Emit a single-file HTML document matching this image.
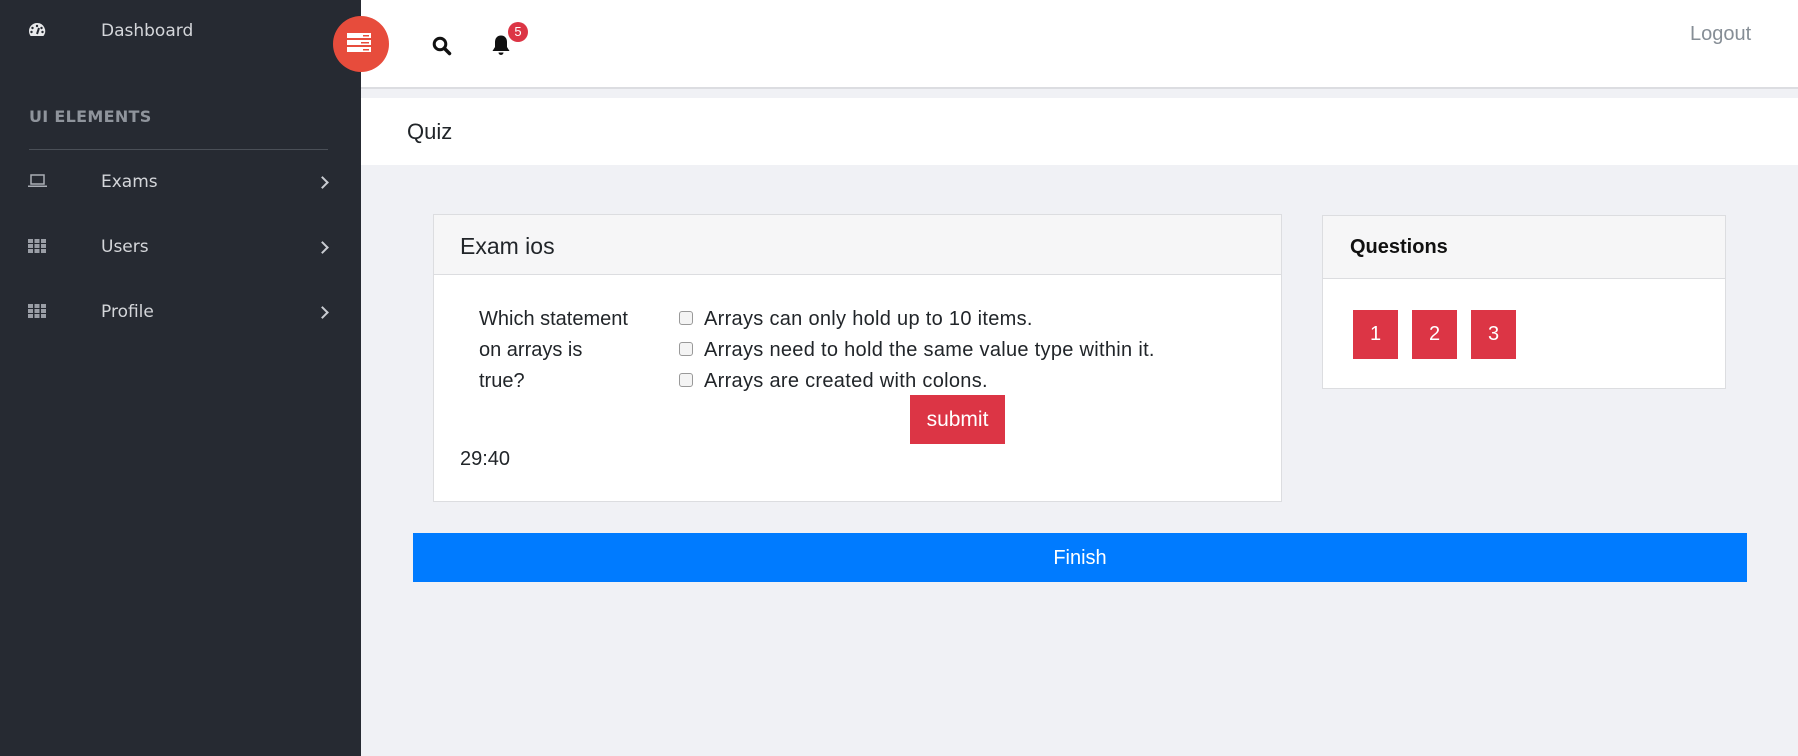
<!DOCTYPE html>
<html><head><meta charset="utf-8"><style>
*{box-sizing:border-box;margin:0;padding:0}
body{width:1798px;height:756px;background:#f0f1f5;font-family:"Liberation Sans",sans-serif;position:relative;overflow:hidden}
.abs{position:absolute}
.side{left:0;top:0;width:361px;height:756px;background:#262a32;color:#c9ccd2;font-family:"DejaVu Sans","Liberation Sans",sans-serif}
.side .t{position:absolute;left:101px;font-size:17px;color:#d4d6da}
.chev{position:absolute;left:318px;width:9px;height:9px;border-right:2px solid #c9ccd2;border-top:2px solid #c9ccd2;transform:rotate(45deg)}
.grid{position:absolute;left:28px;width:18px;height:14px;background:
linear-gradient(90deg,#9a9ea6 0 5px,transparent 5px 6.5px,#9a9ea6 6.5px 11.5px,transparent 11.5px 13px,#9a9ea6 13px 18px);}
.grid:after{content:"";position:absolute;left:0;right:0;top:4px;height:1px;background:#262a32;box-shadow:0 5px 0 #262a32}
.top{left:361px;top:0;width:1437px;height:89px;background:#fff;border-bottom:2px solid #dcdde1}
.btn{background:#dc3545;color:#fff;text-align:center}
.cb{display:inline-block;width:14px;height:14px;border:1px solid #999;border-radius:3px;background:#f4f4f4;margin-right:11px;vertical-align:0}
</style></head><body>
<div class="abs top"></div>
<div class="abs" style="left:361px;top:98px;width:1437px;height:67px;background:#fff"></div>
<div class="abs" style="left:407px;top:119px;font-size:22px;color:#212529">Quiz</div>
<div class="abs" style="left:1690px;top:23px;font-size:20px;color:#868e96">Logout</div>

<div class="abs side">
 <svg class="abs" style="left:28px;top:22px" width="18" height="16" viewBox="0 0 18 16"><path d="M9 1A8 8 0 0 0 1 9c0 2 .6 3.6 1.6 5h12.8A8 8 0 0 0 9 1z" fill="#e8e9eb"/><circle cx="9" cy="4" r="1.2" fill="#262a32"/><circle cx="4.5" cy="6" r="1.2" fill="#262a32"/><circle cx="13.5" cy="6" r="1.2" fill="#262a32"/><circle cx="3.5" cy="10" r="1.2" fill="#262a32"/><circle cx="14.5" cy="10" r="1.2" fill="#262a32"/><path d="M9 12 L11 6" stroke="#262a32" stroke-width="2"/></svg>
 <div class="t" style="top:21px">Dashboard</div>
 <div class="abs" style="left:29px;top:107px;font-size:16px;font-weight:bold;color:#8f949c;letter-spacing:.3px">UI ELEMENTS</div>
 <div class="abs" style="left:29px;top:149px;width:299px;height:1px;background:#4a4f57"></div>
 <svg class="abs" style="left:28px;top:174px" width="19" height="14" viewBox="0 0 19 14"><rect x="3" y="1" width="13" height="9" fill="none" stroke="#aaaeb5" stroke-width="1.5"/><rect x="0" y="11.5" width="19" height="1.5" fill="#aaaeb5"/></svg>
 <div class="t" style="top:172px">Exams</div><div class="chev" style="top:178px"></div>
 <div class="grid" style="top:239px"></div>
 <div class="t" style="top:237px">Users</div><div class="chev" style="top:243px"></div>
 <div class="grid" style="top:304px"></div>
 <div class="t" style="top:302px">Profile</div><div class="chev" style="top:308px"></div>
</div>

<div class="abs" style="left:333px;top:16px;width:56px;height:56px;border-radius:50%;background:#e74c3c"></div>
<svg class="abs" style="left:347px;top:33px" width="24" height="20" viewBox="0 0 24 20"><rect x="0" y="0" width="24" height="5" fill="#fff"/><rect x="0" y="7" width="24" height="5" fill="#fff"/><rect x="0" y="14" width="24" height="5" fill="#fff"/><rect x="16" y="2" width="6" height="1.5" fill="#e74c3c"/><rect x="14" y="9" width="8" height="1.5" fill="#e74c3c"/><rect x="16" y="16" width="6" height="1.5" fill="#e74c3c"/></svg>
<svg class="abs" style="left:432px;top:36px" width="20" height="20" viewBox="0 0 20 20"><circle cx="8" cy="8" r="5.8" fill="none" stroke="#111" stroke-width="3"/><path d="M12.5 12.5L17.5 17.5" stroke="#111" stroke-width="3.5" stroke-linecap="round"/></svg>
<svg class="abs" style="left:491px;top:34px" width="20" height="22" viewBox="0 0 20 22"><path d="M10 1.5c-4 0-6 3-6 6.5v5L1.5 17h17L16 13V8c0-3.5-2-6.5-6-6.5z" fill="#111"/><path d="M7.5 18.5a2.5 2.5 0 0 0 5 0z" fill="#111"/></svg>
<div class="abs" style="left:508px;top:22px;width:20px;height:20px;border-radius:50%;background:#dc3545;color:#fff;font-size:13px;text-align:center;line-height:20px">5</div>

<div class="abs" style="left:433px;top:214px;width:849px;height:288px;background:#fff;border:1px solid #dcdde0"></div>
<div class="abs" style="left:434px;top:215px;width:847px;height:60px;background:#f6f6f7;border-bottom:1px solid #dcdde0"></div>
<div class="abs" style="left:460px;top:233px;font-size:23px;color:#212529">Exam ios</div>
<div class="abs" style="left:479px;top:304px;font-size:20px;line-height:31px;color:#212529;width:170px">Which statement<br>on arrays is<br>true?</div>
<div class="abs" style="left:679px;top:304px;font-size:20px;line-height:31px;color:#212529;letter-spacing:.3px">
<div><span class="cb"></span>Arrays can only hold up to 10 items.</div>
<div><span class="cb"></span>Arrays need to hold the same value type within it.</div>
<div><span class="cb"></span>Arrays are created with colons.</div>
</div>
<div class="abs btn" style="left:910px;top:395px;width:95px;height:49px;line-height:49px;font-size:21px">submit</div>
<div class="abs" style="left:460px;top:448px;font-size:20px;color:#212529">29:40</div>

<div class="abs" style="left:1322px;top:215px;width:404px;height:174px;background:#fff;border:1px solid #dcdde0"></div>
<div class="abs" style="left:1323px;top:216px;width:402px;height:63px;background:#f6f6f7;border-bottom:1px solid #dcdde0"></div>
<div class="abs" style="left:1350px;top:236px;font-size:20px;font-weight:bold;color:#111">Questions</div>
<div class="abs btn" style="left:1353px;top:310px;width:45px;height:49px;line-height:49px;font-size:20px">1</div>
<div class="abs btn" style="left:1412px;top:310px;width:45px;height:49px;line-height:49px;font-size:20px">2</div>
<div class="abs btn" style="left:1471px;top:310px;width:45px;height:49px;line-height:49px;font-size:20px">3</div>

<div class="abs" style="left:413px;top:533px;width:1334px;height:49px;background:#007bff;color:#fff;text-align:center;line-height:51px;font-size:20px">Finish</div>
</body></html>
